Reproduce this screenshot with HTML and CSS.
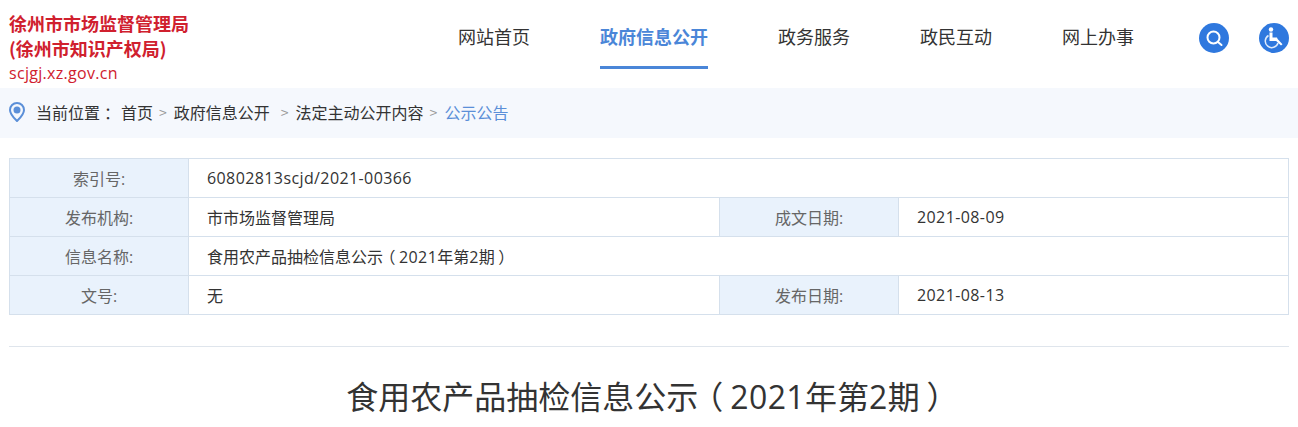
FILE: index.html
```html
<!DOCTYPE html>
<html lang="zh-CN">
<head>
    <meta charset="UTF-8">
    <title>食用农产品抽检信息公示（2021年第2期）</title>
    <link rel="stylesheet" href="styles.css">
</head>
<body>
    <div class="header">
        <div class="logo">
            <div class="logo-name">徐州市市场监督管理局</div>
            <div class="logo-name">(徐州市知识产权局)</div>
            <div class="logo-url">scjgj.xz.gov.cn</div>
        </div>
        <ul class="nav">
            <li>网站首页</li>
            <li class="active">政府信息公开</li>
            <li>政务服务</li>
            <li>政民互动</li>
            <li>网上办事</li>
        </ul>
        <div class="tools">
            <span class="tool">
                <svg width="30" height="30" viewBox="0 0 30 30">
                    <circle cx="14.500" cy="14.500" r="6" fill="none" stroke="#fff" stroke-width="2"/>
                    <path d="M19 19l3.500 3" stroke="#fff" stroke-width="2" stroke-linecap="round"/>
                </svg>
            </span>
            <span class="tool">
                <svg width="30" height="30" viewBox="0 0 30 30">
                    <circle cx="12" cy="6.500" r="2.200" fill="#fff"/>
                    <path d="M10.500 9.500h3v5h4.500l.6 1.500 4.900 5.200-1.500 1.300-4.900-4.500h-6.600z" fill="#fff"/>
                    <path d="M9.500 12.500a6.500 6.500 0 1 0 9.500 7.500" fill="none" stroke="#fff" stroke-width="1.500" opacity="0.85"/>
                </svg>
            </span>
        </div>
    </div>

    <div class="crumbs">
        <svg class="pin" width="16" height="20" viewBox="0 0 16 20">
            <path d="M8 1a7 7 0 0 0-7 7c0 4.500 4.500 8.500 7 11 2.500-2.500 7-6.500 7-11a7 7 0 0 0-7-7z" fill="none" stroke="#5b8fd8" stroke-width="2"/>
            <circle cx="8" cy="8" r="3.500" fill="#5b8fd8"/>
        </svg>
        <span class="crumb-label">当前位置<span class="punct">：</span></span>
        <span>首页</span>
        <span class="sep">&gt;</span>
        <span>政府信息公开</span>
        <span class="sep sep-wide">&gt;</span>
        <span>法定主动公开内容</span>
        <span class="sep">&gt;</span>
        <span class="crumb-current">公示公告</span>
    </div>

    <div class="container">
        <table class="meta">
            <colgroup>
                <col class="col-label">
                <col class="col-value">
                <col class="col-label">
                <col>
            </colgroup>
            <tr>
                <th>索引号:</th>
                <td colspan="3" class="num">60802813scjd/2021-00366</td>
            </tr>
            <tr>
                <th>发布机构:</th>
                <td>市市场监督管理局</td>
                <th>成文日期:</th>
                <td class="num">2021-08-09</td>
            </tr>
            <tr>
                <th>信息名称:</th>
                <td colspan="3">食用农产品抽检信息公示<span class="punct">（</span><span class="num">2021</span>年第<span class="num">2</span>期<span class="punct">）</span></td>
            </tr>
            <tr>
                <th>文号:</th>
                <td>无</td>
                <th>发布日期:</th>
                <td class="num">2021-08-13</td>
            </tr>
        </table>

        <h1 class="title">食用农产品抽检信息公示<span class="punct">（</span><span class="num">2021</span>年第<span class="num">2</span>期<span class="punct">）</span></h1>
    </div>
</body>
</html>
```

FILE: styles.css
```css
* {
    margin: 0;
    padding: 0;
    box-sizing: border-box;
}

html, body {
    height: 427px;
    overflow: hidden;
}

body {
    background-color: #fff;
    color: #333;
    font-family: "Open Sans", "Noto Sans CJK SC", sans-serif;
    font-size: 16px;
}

.num {
    letter-spacing: 0.4px;
}

/* full-width brackets sit in the middle of their em box */
.punct {
    display: inline-block;
    width: 1em;
    text-align: center;
    font-feature-settings: "palt";
}

.header {
    display: flex;
    height: 88px;
    padding: 0 9px;
}

.logo {
    width: 449px;
    padding-top: 11px;
    color: #d0202e;
}

.logo-name {
    font-family: "Noto Sans CJK SC", sans-serif;
    font-size: 18px;
    font-weight: bold;
    line-height: 25px;
}

.logo-url {
    letter-spacing: 0.3px;
    line-height: 25px;
}

.nav {
    display: flex;
    gap: 70px;
    list-style: none;
    font-family: "Noto Sans CJK SC", sans-serif;
    font-size: 18px;
}

.nav li {
    height: 69px;
    padding-top: 23px;
    line-height: 27px;
}

.nav .active {
    color: #4a86d8;
    font-weight: bold;
    border-bottom: 3px solid #4a86d8;
}

.tools {
    display: flex;
    gap: 30px;
    margin-left: auto;
    padding-top: 23px;
}

.tool {
    width: 30px;
    height: 30px;
    border-radius: 50%;
    background-color: #2f78de;
}

.crumbs {
    display: flex;
    align-items: center;
    height: 50px;
    padding: 0 0 2px 9px;
    background-color: #f5f8fd;
    font-family: "Noto Sans CJK SC", sans-serif;
}

.pin {
    margin-right: 11px;
}

.crumb-label {
    width: 85px;
}

.sep {
    margin: 0 7px 0 6px;
    color: #999;
    font-size: 14px;
}

.sep-wide {
    margin-left: 11px;
}

.crumb-current {
    color: #5b8fd8;
}

.container {
    width: 1280px;
    margin: 20px auto 0;
}

.meta {
    width: 100%;
    table-layout: fixed;
    border-collapse: collapse;
    border-bottom: 1px solid #d5e0ec;
}

.col-label {
    width: 179px;
}

.col-value {
    width: 531px;
}

.meta th, .meta td {
    height: 39px;
    padding-bottom: 1px;
    border: 1px solid #d5e0ec;
    font-weight: normal;
}

.meta th {
    background-color: #e9f2fc;
    color: #666;
    text-align: center;
}

.meta td {
    padding-left: 18px;
    color: #333;
}

.title {
    margin-top: 31px;
    padding-top: 26px;
    border-top: 1px solid #dfe5ec;
    font-size: 32px;
    font-weight: normal;
    line-height: 48px;
    text-align: center;
}
```
